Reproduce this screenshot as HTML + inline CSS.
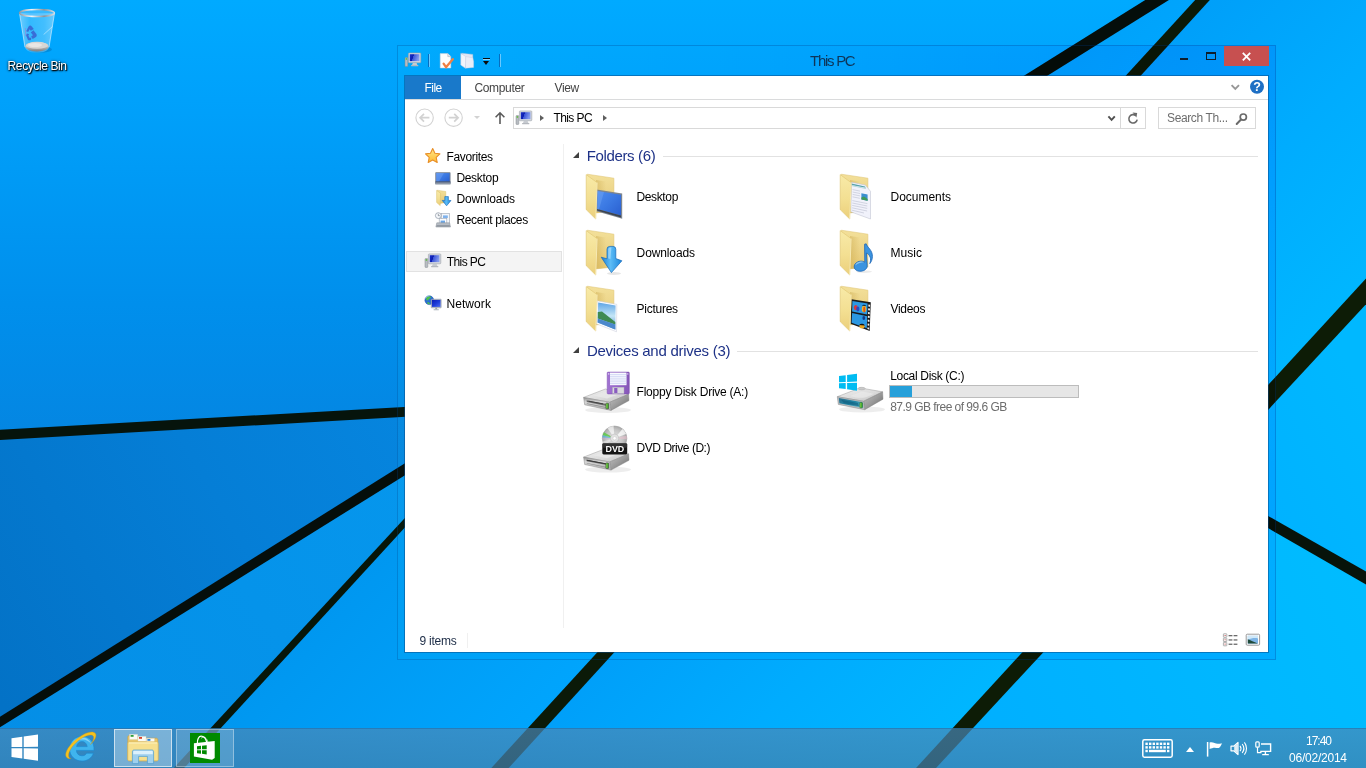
<!DOCTYPE html>
<html lang="en">
<head>
<meta charset="utf-8">
<title>This PC</title>
<style>
html,body{margin:0;padding:0;}
body{width:1366px;height:768px;overflow:hidden;position:relative;background:#0098ee;font-family:"Liberation Sans",sans-serif;font-size:12px;color:#000;}
.a{position:absolute;}
.t{position:absolute;white-space:nowrap;display:block;}
svg{display:block;overflow:visible;}
#wall{position:absolute;left:0;top:0;width:1366px;height:768px;}
/* window chrome */
#frame{position:absolute;left:397px;top:45px;width:879px;height:615px;background:linear-gradient(to right,#8c8c8c,#7c7c7c 45%,#5e5e5e);mix-blend-mode:soft-light;}
#frameb{position:absolute;left:397px;top:45px;width:879px;height:615px;box-sizing:border-box;border:1px solid rgba(0,60,140,.28);}
#client{position:absolute;left:405px;top:76px;width:863px;height:576px;background:#fff;box-shadow:0 0 0 1px rgba(10,70,130,.50);}
#close{position:absolute;left:1224px;top:46px;width:45px;height:20px;background:#c75050;}
#filetab{position:absolute;left:0;top:0;width:56px;height:23px;background:#1979ca;}
#ribline{position:absolute;left:0;top:23px;width:863px;height:1px;background:#dadbdc;}
.box{position:absolute;box-sizing:border-box;border:1px solid #d9d9d9;background:#fff;}
#navsel{position:absolute;left:1px;top:175px;width:156px;height:21px;box-sizing:border-box;background:#f4f4f4;border:1px solid #e2e2e2;}
#vsep{position:absolute;left:158px;top:68px;width:1px;height:484px;background:#f0f0f0;}
.hline{position:absolute;height:1px;background:#e2e2e2;}
.tri{position:absolute;width:0;height:0;border-left:6px solid transparent;border-bottom:6px solid #404040;}
#bar{position:absolute;left:484px;top:309px;width:190px;height:13px;box-sizing:border-box;border:1px solid #bcbcbc;background:#e6e6e6;}
#bar i{position:absolute;left:0;top:0;width:22px;height:11px;background:#26a0da;display:block;}
/* taskbar */
#taskbar{position:absolute;left:0;top:728px;width:1366px;height:40px;background:linear-gradient(rgba(74,136,182,.70),rgba(66,128,172,.72));box-shadow:inset 0 1px 0 rgba(20,90,150,.35);}
.tb{position:absolute;top:1px;height:38px;box-sizing:border-box;}
</style>
</head>
<body>
<svg width="0" height="0" style="position:absolute">
<defs>
<linearGradient id="fBack" x1="0" y1="0" x2="0" y2="1"><stop offset="0" stop-color="#f3e09a"/><stop offset=".5" stop-color="#ecd488"/><stop offset="1" stop-color="#e6c872"/></linearGradient>
<linearGradient id="fFront" x1="0" y1="0" x2="0" y2="1"><stop offset="0" stop-color="#f8eaa8"/><stop offset=".55" stop-color="#f3df92"/><stop offset="1" stop-color="#ebcf7b"/></linearGradient>
<linearGradient id="fShade" x1="0" y1="0" x2="1" y2="0"><stop offset="0" stop-color="#c9a74a" stop-opacity=".45"/><stop offset="1" stop-color="#c9a74a" stop-opacity="0"/></linearGradient>
<linearGradient id="dTop" x1="0" y1="0" x2="1" y2="1"><stop offset="0" stop-color="#f2f2f2"/><stop offset=".6" stop-color="#d9d9d9"/><stop offset="1" stop-color="#bdbdbd"/></linearGradient>
<linearGradient id="dFront" x1="0" y1="0" x2="0" y2="1"><stop offset="0" stop-color="#8f8f8f"/><stop offset=".35" stop-color="#d6d6d6"/><stop offset="1" stop-color="#a9a9a9"/></linearGradient>
<linearGradient id="dSide" x1="0" y1="0" x2="1" y2="1"><stop offset="0" stop-color="#c4c4c4"/><stop offset=".5" stop-color="#9a9a9a"/><stop offset="1" stop-color="#666"/></linearGradient>
<linearGradient id="dGlass" x1="0" y1="0" x2="1" y2="1"><stop offset="0" stop-color="#2b6f8c"/><stop offset=".5" stop-color="#1f86a6"/><stop offset="1" stop-color="#6fc0cc"/></linearGradient>
<linearGradient id="led" x1="0" y1="0" x2="1" y2="0"><stop offset="0" stop-color="#8fe05a"/><stop offset="1" stop-color="#2d9a1c"/></linearGradient>
<linearGradient id="scr" x1="0" y1="0" x2="1" y2="1"><stop offset="0" stop-color="#4f8df0"/><stop offset=".5" stop-color="#3a78e2"/><stop offset="1" stop-color="#2a5fd0"/></linearGradient>
<linearGradient id="arw" x1="0" y1="0" x2="1" y2="0"><stop offset="0" stop-color="#1a7fd6"/><stop offset=".45" stop-color="#5cbcf6"/><stop offset="1" stop-color="#1b86dc"/></linearGradient>
<linearGradient id="sky" x1="0" y1="0" x2="0" y2="1"><stop offset="0" stop-color="#5da4e6"/><stop offset=".5" stop-color="#c4e6f6"/><stop offset="1" stop-color="#4f8fd2"/></linearGradient>
<linearGradient id="pcs" x1="0" y1="0" x2="1" y2=".25"><stop offset="0" stop-color="#1a32cc"/><stop offset=".4" stop-color="#0c1cae"/><stop offset=".44" stop-color="#3a54d8"/><stop offset="1" stop-color="#8299ee"/></linearGradient><linearGradient id="nets" x1="0" y1="0" x2="1" y2="1"><stop offset="0" stop-color="#0a1cb4"/><stop offset=".5" stop-color="#1c3ad8"/><stop offset="1" stop-color="#4c6cf0"/></linearGradient>
<radialGradient id="disc" cx=".5" cy=".5" r=".5"><stop offset="0" stop-color="#fff"/><stop offset=".3" stop-color="#d8d8d8"/><stop offset=".7" stop-color="#c4c4c4"/><stop offset="1" stop-color="#a8a8a8"/></radialGradient>
<linearGradient id="star" x1="0" y1="0" x2="0" y2="1"><stop offset="0" stop-color="#ffe98a"/><stop offset="1" stop-color="#ffb930"/></linearGradient>
<linearGradient id="flop" x1="0" y1="0" x2="1" y2="0"><stop offset="0" stop-color="#a274d2"/><stop offset=".5" stop-color="#9364c6"/><stop offset="1" stop-color="#8656b8"/></linearGradient>
<g id="foldBack"><polygon points="7.3,6.2 33.9,10.2 33.9,43 15,45" fill="url(#fBack)" stroke="#dcc06a" stroke-width=".5"/><polygon points="16,12 26,13.5 26,44 16,45" fill="url(#fShade)"/></g>
<g id="foldFront"><polygon points="6.2,6.6 17.1,14.6 15.7,51 6.2,41.6" fill="url(#fFront)" stroke="#dfc46e" stroke-width=".6"/><polyline points="17.1,14.6 15.7,51" fill="none" stroke="#fff6cf" stroke-width=".7"/></g>
<g id="drive"><polygon points="5.6,33.4 27.4,25 50.6,30.2 31.6,38.3" fill="url(#dTop)" stroke="#9a9a9a" stroke-width=".5"/><polygon points="31.6,38.3 50.6,30.2 51,36.6 33,46.4" fill="url(#dSide)" stroke="#7a7a7a" stroke-width=".4"/><polygon points="5.6,33.4 31.6,38.3 33,46.4 6.7,40.8" fill="url(#dFront)" stroke="#8a8a8a" stroke-width=".5"/></g>
<g id="pc16" transform="scale(1,.93)"><rect x="0" y="6" width="2.8" height="9.5" rx=".6" fill="#b8bcc2" stroke="#7f858c" stroke-width=".5"/><rect x=".7" y="6.7" width="1.4" height="1.6" fill="#58c030"/><rect x="3.4" y="1" width="12.4" height="10.6" rx=".8" fill="#d4d8de" stroke="#9aa0a8" stroke-width=".6"/><rect x="4.8" y="2.4" width="9.6" height="7.4" fill="url(#pcs)"/><path d="M7.8 11.8h3.8l.8 2.3h-5.4z" fill="#c6cad0"/><rect x="6" y="14" width="7.4" height="1.3" rx=".4" fill="#b4b8be"/></g>
</defs>
</svg>
<svg id="wall" width="1366" height="768" viewBox="0 0 1366 768">
<defs>
<linearGradient id="gbase" x1="0" y1="0" x2="1366" y2="0" gradientUnits="userSpaceOnUse"><stop offset="0" stop-color="#0094ec"/><stop offset="1" stop-color="#00b8ff"/></linearGradient>
<linearGradient id="g1" x1="0" y1="0" x2="0" y2="435" gradientUnits="userSpaceOnUse"><stop offset="0" stop-color="#00aaff"/><stop offset=".23" stop-color="#00a1fb"/><stop offset=".7" stop-color="#008fec"/><stop offset="1" stop-color="#0486e2"/></linearGradient>
<linearGradient id="g2" x1="500" y1="410" x2="0" y2="700" gradientUnits="userSpaceOnUse"><stop offset="0" stop-color="#0688e2"/><stop offset=".5" stop-color="#057ed6"/><stop offset="1" stop-color="#0372c6"/></linearGradient>
<linearGradient id="g3" x1="0" y1="768" x2="500" y2="420" gradientUnits="userSpaceOnUse"><stop offset="0" stop-color="#048ee6"/><stop offset="1" stop-color="#0698ee"/></linearGradient>
<linearGradient id="g4" x1="300" y1="637" x2="474" y2="796" gradientUnits="userSpaceOnUse"><stop offset="0" stop-color="#0097f0"/><stop offset="1" stop-color="#00a5fd"/></linearGradient>
<linearGradient id="g6" x1="850" y1="385" x2="1086" y2="601" gradientUnits="userSpaceOnUse"><stop offset="0" stop-color="#009ff9"/><stop offset=".5" stop-color="#00acfe"/><stop offset="1" stop-color="#00b7ff"/></linearGradient>
<linearGradient id="g7" x1="1200" y1="480" x2="1366" y2="400" gradientUnits="userSpaceOnUse"><stop offset="0" stop-color="#00b0ff"/><stop offset="1" stop-color="#00b8ff"/></linearGradient>
<linearGradient id="g8" x1="950" y1="768" x2="1366" y2="600" gradientUnits="userSpaceOnUse"><stop offset="0" stop-color="#00aeff"/><stop offset="1" stop-color="#00bcff"/></linearGradient>
</defs>
<rect width="1366" height="768" fill="url(#gbase)"/>
<polygon fill="url(#g1)" points="0,0 1157,0 516,402 0,435"/>
<polygon fill="url(#g2)" points="0,435 516,403 0,722"/>
<polygon fill="url(#g3)" points="0,722 516,403 179,768 0,768"/>
<polygon fill="url(#g4)" points="179,768 516,403 1157,0 1202.5,0 500,768"/>
<polygon fill="url(#g6)" points="1202.5,0 1366,0 1366,291.5 926,768 500,768"/>
<polygon fill="url(#g7)" points="1366,291.5 1366,578 1193,479"/>
<polygon fill="url(#g8)" points="1366,578 1366,768 926,768 1193,479"/>
<polygon fill="#06140c" points="-29.7,441.8 520.3,410.1 519.7,400.5 -30.2,431.4"/>
<polygon fill="#050e0b" points="-23.1,741.6 1185.8,-10.5 1179.1,-21.2 -27.8,734.1"/>
<polygon fill="#07160a" points="161.5,792.7 519.1,403.0 514.9,399.0 155.8,787.4"/>
<polygon fill="#0b1a08" points="484.5,794.5 1226.7,-18.5 1218.8,-25.8 475.0,785.8"/>
<polygon fill="#0d1c06" points="911.0,795.0 1392.8,275.4 1379.9,263.5 900.3,785.1"/>
<polygon fill="#07130a" points="1394.9,587.9 1195.5,474.7 1190.5,483.3 1389.2,597.9"/>
</svg>
<div id="recycle" class="a" style="left:0;top:0;width:76px;height:80px">
<!--RBICON-->
<svg class="a" style="left:0;top:0" width="60" height="60" viewBox="0 0 60 60">
<defs><linearGradient id="rbg" x1="0" y1="0" x2="1" y2="0"><stop offset="0" stop-color="#fff" stop-opacity=".42"/><stop offset=".3" stop-color="#fff" stop-opacity=".2"/><stop offset=".7" stop-color="#fff" stop-opacity=".26"/><stop offset="1" stop-color="#fff" stop-opacity=".4"/></linearGradient>
<linearGradient id="rbrim" x1="0" y1="0" x2="1" y2="0"><stop offset="0" stop-color="#8f9aa6"/><stop offset=".35" stop-color="#f2f6fa"/><stop offset=".7" stop-color="#8a949e"/><stop offset="1" stop-color="#d5dde5"/></linearGradient>
<linearGradient id="rbbase" x1="0" y1="0" x2="0" y2="1"><stop offset="0" stop-color="#dcdad8"/><stop offset=".5" stop-color="#c2c0be"/><stop offset="1" stop-color="#7e7e80"/></linearGradient></defs>
<ellipse cx="40" cy="49.500" rx="12" ry="3.200" fill="#003a70" opacity=".22"/>
<path d="M19.500 13.200L25 47.200c.6 3.600 5.600 5.400 12 5.400s11.400-1.800 12-5.400L54.500 13.200z" fill="url(#rbg)"/>
<path d="M19.500 13.200L25 47.200M54.500 13.200L49 47.200" stroke="#d9f0ff" stroke-width=".8" opacity=".8" fill="none"/>
<ellipse cx="37" cy="46.600" rx="11.700" ry="4.800" fill="url(#rbbase)"/><ellipse cx="37" cy="45.400" rx="11" ry="3.400" fill="#d9d6d3"/><ellipse cx="35" cy="45" rx="7" ry="2" fill="#efeceb" opacity=".7"/>
<path d="M26.200 31.200l2.400-4.600c.8-1.400 2.200-1.400 3.200-.2l2 2.600-3 1.800-1.200-1.600-1.400 2.800zM33.400 30.200l2.800 3.600c1 1.400.6 3-1 3.800l-2.600 1.400-1.400-2.800 1.800-1-2.200-2.800zM27 33.400l-1 1.800 1.800 4.200c.6 1 1.800 1.200 3 .6l.6-2.600-1.800.6-1.200-2.600.8-1.200z" fill="#3a5fd0" opacity=".85"/>
<path d="M25.400 28l.4 8" stroke="#b070c8" stroke-width="1" opacity=".5"/>
<path d="M52.400 26.600l-8.800 8" stroke="#fff" stroke-width=".8" opacity=".55"/>
<ellipse cx="37" cy="12.900" rx="17.400" ry="3.500" fill="#9fd8ff" fill-opacity=".35" stroke="url(#rbrim)" stroke-width="1.500"/>
</svg>

<span class="t" style="left:7.60px;top:60.44px;font-size:12px;line-height:12px;letter-spacing:-0.396px;color:#fff;text-shadow:1px 1px 1px rgba(0,0,0,.95),0 1px 2px rgba(0,0,0,.85),0 0 3px rgba(0,0,0,.55);">Recycle Bin</span>
</div>
<div id="frame"></div><div id="frameb"></div>
<div id="titlebar" class="a" style="left:405px;top:46px;width:863px;height:30px">

<!--QAT-->
<svg class="a" style="left:0;top:6px" width="16" height="16" viewBox="0 0 16 16"><use href="#pc16"/></svg>
<div class="a" style="left:23px;top:8px;width:1px;height:13px;background:rgba(10,90,170,.75)"></div><div class="a" style="left:24px;top:8px;width:1px;height:13px;background:rgba(150,215,255,.7)"></div>
<svg class="a" style="left:34px;top:6px" width="16" height="17" viewBox="0 0 16 17"><path d="M1.200 1.600h7.600l3 3v11.400H1.200z" fill="#fdfdfd" stroke="#c9ccd2" stroke-width=".5"/><path d="M8.800 1.600v3h3" fill="#e2e6ee" stroke="#9aa2ae" stroke-width=".5"/><path d="M4.600 11.600l2.400 3.600 6.800-8" fill="none" stroke="#ef7f43" stroke-width="2.300" stroke-linecap="round" stroke-linejoin="round"/></svg>
<svg class="a" style="left:55px;top:6px" width="16" height="17" viewBox="0 0 16 17"><polygon points="1.600,1.200 12.800,2.400 12.800,13.400 5.600,14.600" fill="#dfe5f4" stroke="#b9c2da" stroke-width=".4"/><polygon points=".8,1.400 5.800,4.600 5.400,16.200 .8,13" fill="#f1f4fb" stroke="#c3cbe0" stroke-width=".5"/><polygon points="5.800,4.600 12.800,5.800 13.600,9.400 13.600,15.400 5.400,16.200" fill="#e9edf8" stroke="#c3cbe0" stroke-width=".4"/></svg>
<div class="a" style="left:78px;top:12px;width:7px;height:1px;background:#0b0b0b"></div><div class="a" style="left:78px;top:13px;width:7px;height:1px;background:rgba(170,225,255,.8)"></div>
<div class="a" style="left:78px;top:15px;width:0;height:0;border-left:3.500px solid transparent;border-right:3.500px solid transparent;border-top:4px solid #0b0b0b"></div>
<div class="a" style="left:94px;top:8px;width:1px;height:13px;background:rgba(10,90,170,.75)"></div><div class="a" style="left:95px;top:8px;width:1px;height:13px;background:rgba(150,215,255,.7)"></div>

<span class="t" style="left:405.00px;top:6.70px;font-size:15px;line-height:15px;letter-spacing:-1.273px;color:#0e3558;">This PC</span>
<!--CAPTION-->
<div class="a" style="left:775px;top:12px;width:8px;height:2px;background:#0e1e2c"></div>
<div class="a" style="left:801px;top:6px;width:10px;height:8px;box-sizing:border-box;border:1px solid #0e1e2c;border-top-width:2px"></div>

</div>
<div id="close"><svg class="a" style="left:17px;top:6px" width="11" height="10" viewBox="0 0 11 10"><path d="M1.800 .9l7.400 7.400M9.200 .9l-7.400 7.400" stroke="#fff" stroke-width="1.800" fill="none"/></svg></div>

<div id="client">
<div id="filetab"></div>
<span class="t" style="left:19.50px;top:5.94px;font-size:12px;line-height:12px;letter-spacing:-0.544px;color:#fff;">File</span>
<span class="t" style="left:69.40px;top:5.94px;font-size:12px;line-height:12px;letter-spacing:-0.327px;color:#444;">Computer</span>
<span class="t" style="left:149.60px;top:5.94px;font-size:12px;line-height:12px;letter-spacing:-0.441px;color:#444;">View</span>
<div id="ribline"></div>
<!--RIBRIGHT-->
<svg class="a" style="left:825px;top:8px" width="11" height="7" viewBox="0 0 11 7"><path d="M1.600 1.200l3.700 3.700 3.700-3.700" fill="none" stroke="#979797" stroke-width="1.900"/></svg>
<svg class="a" style="left:844px;top:3px" width="16" height="16" viewBox="0 0 16 16"><circle cx="8" cy="7.800" r="7" fill="#1e6fc4"/><text x="8" y="12.300" text-anchor="middle" font-family="Liberation Sans, sans-serif" font-weight="bold" font-size="12.500" fill="#fff">?</text></svg>

<!--NAVBTNS-->
<svg class="a" style="left:9px;top:31px" width="22" height="22" viewBox="0 0 22 22"><circle cx="10.600" cy="10.700" r="8.700" fill="none" stroke="#d2d2d2" stroke-width="1.100"/><path d="M15.400 10.700H6.400M10 6.800l-3.900 3.900 3.900 3.900" fill="none" stroke="#d2d2d2" stroke-width="1.700"/></svg>
<svg class="a" style="left:38px;top:31px" width="22" height="22" viewBox="0 0 22 22"><circle cx="10.600" cy="10.700" r="8.700" fill="none" stroke="#d2d2d2" stroke-width="1.100"/><path d="M5.800 10.700h9M11.200 6.800l3.900 3.900-3.900 3.900" fill="none" stroke="#d2d2d2" stroke-width="1.700"/></svg>
<div class="a" style="left:69px;top:40px;width:0;height:0;border-left:3.500px solid transparent;border-right:3.500px solid transparent;border-top:3.500px solid #d2d2d2"></div>
<svg class="a" style="left:89px;top:35px" width="12" height="14" viewBox="0 0 12 14"><path d="M6 13V2M1.600 6.200L6 1.800l4.400 4.400" fill="none" stroke="#5a5a5a" stroke-width="1.600"/></svg>

<div class="box" style="left:108px;top:31px;width:633px;height:22px"></div>
<div class="a" style="left:715px;top:32px;width:1px;height:20px;background:#d9d9d9"></div>
<div class="box" style="left:753px;top:31px;width:98px;height:22px"></div>
<!--ADDRICONS-->
<svg class="a" style="left:111px;top:34px" width="16" height="16" viewBox="0 0 16 16"><use href="#pc16"/></svg>
<div class="a" style="left:135px;top:39px;width:0;height:0;border-top:3.500px solid transparent;border-bottom:3.500px solid transparent;border-left:4px solid #5e5e5e"></div>
<div class="a" style="left:198px;top:39px;width:0;height:0;border-top:3.500px solid transparent;border-bottom:3.500px solid transparent;border-left:4px solid #5e5e5e"></div>
<svg class="a" style="left:702px;top:39px" width="10" height="8" viewBox="0 0 10 8"><path d="M1.400 1.400l3.200 3.500 3.200-3.500" fill="none" stroke="#505050" stroke-width="1.900"/></svg>
<svg class="a" style="left:721px;top:36px" width="14" height="14" viewBox="0 0 14 14"><path d="M9.900 3.700A4.200 4.200 0 1 0 11.200 7.600" fill="none" stroke="#6a6a6a" stroke-width="1.600"/><path d="M6.600 .6l4.600.4-.8 4.600z" fill="#6a6a6a"/></svg>
<svg class="a" style="left:830px;top:36px" width="14" height="14" viewBox="0 0 14 14"><circle cx="8.300" cy="5.100" r="3.100" fill="none" stroke="#6a6a6a" stroke-width="1.700"/><path d="M6 7.500L1.700 12" stroke="#6a6a6a" stroke-width="2" stroke-linecap="round"/></svg>

<span class="t" style="left:148.40px;top:35.74px;font-size:12px;line-height:12px;letter-spacing:-0.562px;">This PC</span>
<span class="t" style="left:762.00px;top:35.74px;font-size:12px;line-height:12px;letter-spacing:-0.377px;color:#6d6d6d;">Search Th...</span>
<div id="vsep"></div>
<div id="navsel"></div>
<!--NAVICONS-->
<svg class="a" style="left:19px;top:71px" width="18" height="18" viewBox="0 0 18 18"><path d="M8.700 1.600l2.200 4.700 5 .6-3.700 3.500 1 5.100-4.500-2.500-4.500 2.500 1-5.100L1.500 6.900l5-.6z" fill="url(#star)" stroke="#e88f28" stroke-width="1.100" stroke-linejoin="round"/></svg>
<svg class="a" style="left:30px;top:96px" width="16" height="13" viewBox="0 0 16 13"><rect x=".3" y=".3" width="15.200" height="12" rx=".6" fill="#6f7b8c"/><rect x="1.200" y="1.100" width="13.400" height="8.300" fill="url(#scr)"/><polygon points="1.200,1.100 9,1.100 4,9.400 1.200,9.400" fill="#8db7fa" opacity=".3"/><rect x=".3" y="10" width="15.200" height="2.300" fill="#8d97a6"/><rect x=".3" y="9.600" width="15.200" height=".7" fill="#2c3f66"/></svg>
<svg class="a" style="left:31px;top:113px" width="17" height="18" viewBox="0 0 17 18"><polygon points="1.200,1.200 9.800,2.500 9.800,13.400 4.200,14.400" fill="url(#fBack)" stroke="#d9bc62" stroke-width=".4"/><polygon points=".6,1.400 4.600,4.200 4.200,16.600 .6,13.400" fill="url(#fFront)" stroke="#dcc068" stroke-width=".5"/><path d="M8.800 7.600h3.600v3.800l2.600.1-4.400 5.300-4.400-5.400 2.600.1z" fill="url(#arw)" stroke="#1668b8" stroke-width=".6" stroke-linejoin="round"/></svg>
<svg class="a" style="left:30px;top:136px" width="16" height="16" viewBox="0 0 16 16"><rect x="6.200" y="1.600" width="8.400" height="10" fill="#f4f7fb" stroke="#9aa4b2" stroke-width=".6"/><rect x="8" y="3.400" width="4.800" height="2.600" fill="#7fb2ec"/><rect x="4.200" y="6.600" width="7.600" height="6" fill="#fbfcfe" stroke="#9aa4b2" stroke-width=".6"/><rect x="5.600" y="8.600" width="4.400" height="2.400" fill="#6aa6e6"/><path d="M1.800 10.800h12.800l.9 4.200H.900z" fill="#b6bcc4" stroke="#868d96" stroke-width=".5"/><rect x="1.600" y="13.200" width="13.200" height="1.400" fill="#8b929b"/><circle cx="3.300" cy="3.600" r="2.900" fill="#f7f9fc" stroke="#8d96a3" stroke-width=".7"/><path d="M3.300 1.800v1.900h1.500" fill="none" stroke="#5a6470" stroke-width=".6"/></svg>
<svg class="a" style="left:20px;top:177.300px" width="16" height="16" viewBox="0 0 16 16"><use href="#pc16"/></svg>
<svg class="a" style="left:19px;top:218px" width="18" height="18" viewBox="0 0 18 18"><circle cx="5.300" cy="6.200" r="4.400" fill="#2a6fd6" stroke="#1d4fa8" stroke-width=".5"/><path d="M2.200 3.800c1.600-1.800 3.800-2 5-.8-.4 1.200-1.800 1.400-2.400 2.600-.4 1-1.600 1-2.600.4zM3 8.400c1.200-.6 2.600 0 3 1.600-1.200.6-2.600 0-3-1.600z" fill="#4fc04a"/><path d="M1.600 4.400a4.400 4.400 0 0 1 4-2.600" fill="none" stroke="#bfe0ff" stroke-width=".7" opacity=".8"/><rect x="7.200" y="5.200" width="10" height="8.600" rx=".5" fill="#b9c0cc" stroke="#7f8896" stroke-width=".5"/><rect x="7.900" y="5.900" width="8.600" height="7" fill="url(#nets)"/><rect x="11.300" y="13.600" width="1.800" height="1.800" fill="#9aa1ab"/><rect x="9.600" y="15.200" width="5.200" height="1" rx=".3" fill="#a9b0b9"/></svg>

<span class="t" style="left:41.50px;top:74.74px;font-size:12px;line-height:12px;letter-spacing:-0.356px;">Favorites</span>
<span class="t" style="left:51.40px;top:95.74px;font-size:12px;line-height:12px;letter-spacing:-0.303px;">Desktop</span>
<span class="t" style="left:51.40px;top:116.74px;font-size:12px;line-height:12px;letter-spacing:-0.096px;">Downloads</span>
<span class="t" style="left:51.40px;top:137.74px;font-size:12px;line-height:12px;letter-spacing:-0.354px;">Recent places</span>
<span class="t" style="left:41.80px;top:179.74px;font-size:12px;line-height:12px;letter-spacing:-0.612px;">This PC</span>
<span class="t" style="left:41.40px;top:221.74px;font-size:12px;line-height:12px;letter-spacing:0.093px;">Network</span>
<div class="tri" style="left:168px;top:76px"></div>
<span class="t" style="left:181.70px;top:72.00px;font-size:15px;line-height:15px;letter-spacing:-0.352px;color:#1e3287;">Folders (6)</span>
<div class="hline" style="left:258px;top:80px;width:595px"></div>
<div class="tri" style="left:168px;top:271px"></div>
<span class="t" style="left:181.90px;top:266.70px;font-size:15px;line-height:15px;letter-spacing:-0.268px;color:#1e3287;">Devices and drives (3)</span>
<div class="hline" style="left:332px;top:275px;width:521px"></div>
<!--ITEMICONS-->
<svg class="a" style="left:175px;top:92px" width="56" height="56" viewBox="0 0 56 56"><use href="#foldBack"/>
<polygon points="16.6,21.4 42.2,25.6 42.2,50.8 16.4,43.2" fill="#7d858f"/><polygon points="17.4,23 41,26.8 41,47.6 17.2,41" fill="url(#scr)"/><polygon points="17.2,41 41,47.6 41,49.6 17.1,42.6" fill="#3c4450"/><polygon points="17.4,23 24,24 19,41.5 17.2,41" fill="#7fb0f6" opacity=".35"/>
<use href="#foldFront"/></svg>
<svg class="a" style="left:175px;top:148px" width="56" height="56" viewBox="0 0 56 56"><use href="#foldBack"/><use href="#foldFront"/>
<ellipse cx="34" cy="49.5" rx="7" ry="1.4" fill="#000" opacity=".10"/>
<path d="M27 25.2q0-2.8 2.8-2.8h3.2q2.8 0 2.8 2.8v9.4l6.1 2.2-10.5 11.8-10.2-15.4 5.8 1.6z" fill="url(#arw)" stroke="#1668b8" stroke-width=".7" stroke-linejoin="round"/>
<path d="M28.2 25.6q0-2 2-2h1.2l-1 11.5-2.2-.6z" fill="#bfe6ff" opacity=".55"/></svg>
<svg class="a" style="left:175px;top:204px" width="56" height="56" viewBox="0 0 56 56"><use href="#foldBack"/>
<polygon points="17.1,20.8 36.8,24.4 36.5,51.8 16.4,43.8" fill="#fbfcff" stroke="#c8ccd8" stroke-width=".5"/>
<polygon points="18.2,22.4 35.6,25.6 35.3,49.6 17.6,42.6" fill="url(#sky)"/>
<polygon points="17.8,32 22,31.5 35.3,42 35.3,44.5 17.7,38.5" fill="#3f8a52"/><polygon points="17.7,38.4 35.3,44.4 35.3,49.6 17.6,42.6" fill="#4b88cc"/>
<use href="#foldFront"/></svg>
<svg class="a" style="left:429px;top:92px" width="56" height="56" viewBox="0 0 56 56"><use href="#foldBack"/>
<polygon points="17.5,14.2 31.4,17.1 36.5,23.3 36.5,51 16.8,43.8" fill="#f1f2fb" stroke="#b9bccb" stroke-width=".5"/>
<polygon points="17.6,15.6 31,18.4 31.8,19.8 17.6,16.9" fill="#57a3ab"/><polygon points="17.6,17.2 32,20.2 32,20.9 17.6,17.9" fill="#a9d4d8"/>
<polygon points="27.4,25.2 33.6,26.4 33.6,32.8 27.4,31.6" fill="#3b8ed0"/><polygon points="27.4,29.6 30,28.4 33.6,31 33.6,32.8 27.4,31.6" fill="#3f9a58"/>
<g stroke="#c3c5d6" stroke-width=".7"><path d="M18.6 21.6l7.4 1.5M18.6 24l7.4 1.5M18.6 26.4l7.4 1.5M18.5 28.8l7.4 1.5M18.4 32.6l15 3M18.3 35l15 3M18.2 37.4l15 3M18.1 39.8l15 3.2M18 42.2l12 2.8"/></g>
<use href="#foldFront"/></svg>
<svg class="a" style="left:429px;top:148px" width="56" height="56" viewBox="0 0 56 56"><use href="#foldBack"/><use href="#foldFront"/>
<ellipse cx="30" cy="47.6" rx="8" ry="1.3" fill="#000" opacity=".08"/>
<path d="M30.6 20.2l1.6-.4c.6 3.2 6.4 6.200 6.200 12.600 0 3.200-1.200 5.400-2.600 7.200.8-2.400 1-4.400.4-6.200-.6-2.200-2.400-3.800-3.800-4.400l.8 12.600c.2 3-2.600 5.200-6 5.600-3.800.4-6.800-1.400-7-4.200-.2-2.800 2.400-5.400 6-5.800 1.800-.2 3.400.2 4.600 1z" fill="#3b94e0" stroke="#1c66b6" stroke-width=".8" stroke-linejoin="round"/>
<path d="M21.200 41.400c.4-2 2.600-3.600 5.200-3.800 1.600-.2 3 .2 4 .8-2.200-.2-6.200.6-9.200 3z" fill="#9fd2f8" opacity=".8"/></svg>
<svg class="a" style="left:429px;top:204px" width="56" height="56" viewBox="0 0 56 56"><use href="#foldBack"/>
<polygon points="17.5,19.3 36.8,22.2 35.7,51 16.600,43.8" fill="#1a1a1a"/>
<polygon points="18.4,21 33.6,23.400 33.200,34.600 18.100,31.400" fill="#2c98e2"/><polygon points="18.100,33 33.200,36.200 32.800,48.200 17.600,42.800" fill="#2c98e2"/>
<ellipse cx="21.800" cy="27.600" rx="2" ry="2.600" fill="#d8383c"/><ellipse cx="23.800" cy="29" rx="1.600" ry="2.400" fill="#2a48c0"/><ellipse cx="30" cy="29" rx="2.200" ry="3.200" fill="#f0b428"/><ellipse cx="30.200" cy="29.400" rx="1" ry="3" fill="#d8541c"/><path d="M27.800 25.600a3 3 0 0 1 4.600.4z" fill="#111"/>
<ellipse cx="28" cy="46.200" rx="2.600" ry="2.200" fill="#e8a420"/><path d="M25.200 45a3 2.400 0 0 1 5.600.6z" fill="#111"/><ellipse cx="29.800" cy="38" rx="1.400" ry="2" fill="#153a86"/>
<g fill="#f4f4f4"><polygon points="34.400,24.400 36.100,24.700 36,26.700 34.300,26.400"/><polygon points="34.250,28.200 35.950,28.500 35.850,30.500 34.150,30.200"/><polygon points="34.100,32 35.800,32.300 35.700,34.300 34,34"/><polygon points="33.950,35.800 35.650,36.100 35.550,38.100 33.850,37.800"/><polygon points="33.800,39.600 35.500,39.900 35.400,41.900 33.700,41.600"/><polygon points="33.650,43.400 35.350,43.700 35.250,45.700 33.550,45.400"/><polygon points="33.500,47.200 35.200,47.700 35.100,49.500 33.400,49"/></g>
<use href="#foldFront"/></svg>
<svg class="a" style="left:173px;top:288px" width="60" height="54" viewBox="0 0 60 54"><ellipse cx="30" cy="46" rx="23" ry="3" fill="#000" opacity=".07"/><use href="#drive"/>
<polygon points="8.6,36.200 28.600,40 28.800,42 8.800,38" fill="#6a6a6a"/><polygon points="10.600,36.800 25,39.400 25,40.200 10.600,37.600" fill="#3a3a3a"/>
<polygon points="8.800,39.200 27.600,43 27.600,43.800 8.900,39.900" fill="#8d8d8d"/>
<rect x="27.800" y="39.200" width="2.800" height="5.600" rx=".6" fill="url(#led)" stroke="#333" stroke-width=".5"/>
<polygon points="16,31.800 27.600,27.600 40,30.400 29,34.600" fill="#e9e9e9" opacity=".8"/>
<rect x="29.200" y="8.100" width="22.100" height="21.800" rx=".8" fill="url(#flop)" stroke="#7a4cae" stroke-width=".5"/>
<rect x="32" y="8.600" width="16.500" height="12.600" fill="#fafaff"/>
<g stroke="#b9c3ee" stroke-width=".6"><path d="M32 10.600h16.500M32 12.400h16.500M32 14.200h16.500M32 16h16.500M32 17.800h16.500M32 19.600h16.500"/></g>
<rect x="34.500" y="23.200" width="11.500" height="6.400" fill="#d9d9dd" stroke="#a9a9b4" stroke-width=".4"/><rect x="36.200" y="24" width="3.200" height="5" fill="#8a5cc0"/>
<circle cx="30.700" cy="9.900" r=".7" fill="#f2e9ff"/><circle cx="49.800" cy="9.900" r=".7" fill="#f2e9ff"/>
</svg>
<svg class="a" style="left:173px;top:344px" width="60" height="54" viewBox="0 0 60 54"><ellipse cx="30" cy="49.600" rx="23" ry="3" fill="#000" opacity=".07"/>
<g transform="translate(0,3.700)"><use href="#drive"/>
<polygon points="8.600,36 28.600,39.800 28.800,41.400 8.800,37.600" fill="#5d5d5d"/><polygon points="8.700,36.100 28.600,39.900 28.600,40.500 8.700,36.700" fill="#2e2e2e"/>
<polygon points="8.800,39.200 27.600,43 27.600,43.800 8.900,39.900" fill="#8d8d8d"/>
<rect x="27.800" y="39.200" width="2.800" height="5.600" rx=".6" fill="url(#led)" stroke="#333" stroke-width=".5"/>
<polygon points="16,31.800 27.600,27.600 40,30.400 29,34.600" fill="#e9e9e9" opacity=".8"/></g>
<clipPath id="dvdclip"><rect x="20" y="4" width="36" height="19.600"/></clipPath>
<g clip-path="url(#dvdclip)"><circle cx="36.600" cy="18.300" r="12.300" fill="url(#disc)" stroke="#9c9c9c" stroke-width=".5"/>
<path d="M36.6 18.3 L25.9 12.2 A12.3 12.3 0 0 0 24.7 15.3 z" fill="#58cc40" opacity=".8"/><path d="M36.6 18.3 L24.7 15.3 A12.3 12.3 0 0 0 24.3 17.4 z" fill="#40b4dc" opacity=".65"/><path d="M36.6 18.3 L24.3 17.4 A12.3 12.3 0 0 0 24.4 19.6 z" fill="#c8a0d8" opacity=".4"/><path d="M36.6 18.3 L48.2 14.1 A12.3 12.3 0 0 0 44.5 8.9 z" fill="#ffffff" opacity=".75"/><path d="M36.6 18.3 L48.9 19.2 A12.3 12.3 0 0 0 48.6 15.7 z" fill="#f0c0d0" opacity=".5"/><path d="M36.6 18.3 L35.5 6.0 A12.3 12.3 0 0 0 29.5 8.2 z" fill="#ffffff" opacity=".65"/><path d="M36.6 18.3 L24.7 21.5 A12.3 12.3 0 0 0 26.5 25.4 z" fill="#ffffff" opacity=".4"/>
<circle cx="36.600" cy="18.300" r="4.200" fill="#e2e2e2" stroke="#b4b4b4" stroke-width=".5"/><circle cx="36.600" cy="18.300" r="1.700" fill="#fff" stroke="#bdbdbd" stroke-width=".4"/></g>
<rect x="24.300" y="23.200" width="24.900" height="11.300" rx="1.400" fill="#141414"/><rect x="24.300" y="23.200" width="24.900" height="4.500" rx="1.400" fill="#4a4a4a" opacity=".55"/>
<text x="36.900" y="31.900" text-anchor="middle" font-family="Liberation Sans, sans-serif" font-weight="bold" font-size="9" fill="#fff" opacity=".99" textLength="18.800" lengthAdjust="spacingAndGlyphs">DVD</text>
</svg>
<svg class="a" style="left:427px;top:288px" width="60" height="54" viewBox="0 0 60 54"><ellipse cx="30" cy="45.400" rx="23" ry="3" fill="#000" opacity=".07"/>
<g transform="translate(0,-.8)"><polygon points="5.300,33.500 28.100,24.700 50.600,28.600 31.600,38.100" fill="url(#dTop)" stroke="#9a9a9a" stroke-width=".5"/><polygon points="31.600,38.100 50.600,28.600 51,36 32.700,46.500" fill="url(#dSide)" stroke="#7a7a7a" stroke-width=".4"/><polygon points="5.300,33.500 31.600,38.100 32.700,46.500 6.300,41.200" fill="#b9bdc0" stroke="#8a8a8a" stroke-width=".5"/>
<polygon points="6.800,34.800 30.400,39 31.200,44.800 7.400,40" fill="url(#dGlass)"/><polygon points="9,36.600 26,39.800 27,43 12,40" fill="#0e5a7c" opacity=".6"/>
<rect x="27.800" y="39.200" width="2.600" height="5.400" rx=".6" fill="url(#led)" stroke="#1a4a1a" stroke-width=".4"/>
<ellipse cx="29.600" cy="25.400" rx="3.600" ry="1.300" fill="#c9c9c9" stroke="#9d9d9d" stroke-width=".4"/>
<path d="M18 32.800l12-4.400 12 2.200-6 2.800c-4 1.600-8 1.400-12 .8z" fill="#eaeaea" opacity=".7"/></g>
<g fill="#00bcf2"><polygon points="7,12 13.700,11.300 13.700,17.900 7,18.300"/><polygon points="15.100,11.100 25,9.800 25,17.600 15.100,17.900"/><polygon points="7,19.300 13.700,19.100 13.700,25 7,24.300"/><polygon points="15.100,19.100 25,18.800 25,26.700 15.100,25.300"/></g>
</svg>

<span class="t" style="left:231.50px;top:114.84px;font-size:12px;line-height:12px;letter-spacing:-0.369px;">Desktop</span>
<span class="t" style="left:231.60px;top:170.84px;font-size:12px;line-height:12px;letter-spacing:-0.121px;">Downloads</span>
<span class="t" style="left:231.60px;top:226.84px;font-size:12px;line-height:12px;letter-spacing:-0.263px;">Pictures</span>
<span class="t" style="left:485.50px;top:114.84px;font-size:12px;line-height:12px;letter-spacing:-0.024px;">Documents</span>
<span class="t" style="left:485.50px;top:170.84px;font-size:12px;line-height:12px;letter-spacing:0.042px;">Music</span>
<span class="t" style="left:485.50px;top:226.84px;font-size:12px;line-height:12px;letter-spacing:-0.296px;">Videos</span>
<span class="t" style="left:231.60px;top:309.84px;font-size:12px;line-height:12px;letter-spacing:-0.242px;">Floppy Disk Drive (A:)</span>
<span class="t" style="left:231.60px;top:365.84px;font-size:12px;line-height:12px;letter-spacing:-0.470px;">DVD Drive (D:)</span>
<span class="t" style="left:485.20px;top:293.84px;font-size:12px;line-height:12px;letter-spacing:-0.320px;">Local Disk (C:)</span>
<div id="bar"><i></i></div>
<span class="t" style="left:485.20px;top:325.14px;font-size:12px;line-height:12px;letter-spacing:-0.534px;color:#6d6d6d;">87.9 GB free of 99.6 GB</span>
<span class="t" style="left:14.40px;top:558.64px;font-size:12px;line-height:12px;letter-spacing:-0.229px;color:#1b2b45;">9 items</span>
<!--STATUSICONS-->
<div class="a" style="left:62px;top:557px;width:1px;height:15px;background:#f0f0f0"></div>
<svg class="a" style="left:817px;top:557px" width="18" height="14" viewBox="0 0 18 14"><g fill="#fff" stroke="#9a9a9a" stroke-width=".8"><rect x="1.400" y=".8" width="3.400" height="3.400" rx=".4"/><rect x="1.400" y="5.100" width="3.400" height="3.400" rx=".4"/><rect x="1.400" y="9.400" width="3.400" height="3.400" rx=".4"/></g><g fill="#c04040"><rect x="2.600" y="2" width="1" height="1"/><rect x="2.600" y="6.300" width="1" height="1"/><rect x="2.600" y="10.600" width="1" height="1"/></g><g fill="#6a6a6a"><rect x="6.600" y="2" width="3.800" height="1.300"/><rect x="11.600" y="2" width="3.800" height="1.300"/><rect x="6.600" y="6.300" width="3.800" height="1.300"/><rect x="11.600" y="6.300" width="3.800" height="1.300"/><rect x="6.600" y="10.600" width="3.800" height="1.300"/><rect x="11.600" y="10.600" width="3.800" height="1.300"/></g></svg>
<svg class="a" style="left:840px;top:557px" width="16" height="14" viewBox="0 0 16 14"><rect x="1.200" y="1.200" width="13.400" height="11" rx="1" fill="#fdfdfd" stroke="#8e8e8e" stroke-width=".9"/><rect x="2.800" y="2.800" width="10.200" height="7.800" fill="#7db4e6"/><path d="M2.800 6l4.600 2.200 5.600 2.400H2.800z" fill="#1f4a3a"/><path d="M2.800 3h10.200v2.400c-3.400-.8-6.800-.2-10.200 1.200z" fill="#cfe8f8"/></svg>

</div>

<div id="taskbar">
<!--TBICONS-->
<svg class="a" style="left:11px;top:6px" width="28" height="28" viewBox="0 0 28 28"><g fill="#fff"><polygon points=".5,4.200 11.300,2.700 11.300,12.900 .5,13"/><polygon points="12.700,2.500 27,.5 27,12.800 12.700,12.900"/><polygon points=".5,14.200 11.300,14.300 11.300,24.500 .5,23"/><polygon points="12.700,14.300 27,14.400 27,26.700 12.700,24.700"/></g></svg>
<svg class="a" style="left:62px;top:1px" width="38" height="36" viewBox="0 0 38 36"><path d="M20 7.200c-7.200 0-12.400 5.200-12.400 12.600 0 7.200 5.200 12.200 12.400 12.200 5.400 0 9.800-3 11.400-7.800h-6.800c-.8 1.600-2.400 2.600-4.600 2.600-3.200 0-5.400-2.200-5.600-5.400h17.600c.6-8.200-4.400-14.200-12-14.200zm-5.400 10.400c.4-3 2.400-5 5.400-5 2.800 0 4.800 2 5.200 5z" fill="#3fb4ee" stroke="#1a86d0" stroke-width=".6"/><path d="M20 8.600c-6 0-10.600 4.200-11 10.200 1.200-5 5.400-8.200 11-8.200 4.400 0 7.800 2 9.600 5.200-1.600-4.400-5-7.200-9.600-7.200z" fill="#a8e0fa" opacity=".7"/><path d="M33.400 4.600c1.600 2.400-.4 6.600-5 11 3-3.800 4-7 2.800-8.600-1.600-2.200-6.600-1-12 2.600C11.600 14.600 6 22.400 6.600 27c.2 1.400 1 2.200 2.200 2.600-2.200.2-3.800-.4-4.600-1.800C2 24 7.400 15.200 16 9c7.600-5.600 15-7.600 17.400-4.400z" fill="#f6c21e" stroke="#d79a10" stroke-width=".4"/></svg>
<div class="tb" style="left:114px;width:58px;background:rgba(255,255,255,.34);border:1px solid rgba(255,255,255,.62)"></div>
<svg class="a" style="left:126px;top:4px" width="34" height="32" viewBox="0 0 34 32"><path d="M1.800 5.200c0-1 .6-1.600 1.600-1.600h7c.8 0 1.400.4 1.800 1l1 1.600h17c1 0 1.600.6 1.600 1.600v19.400c0 1-.6 1.600-1.600 1.600H3.400c-1 0-1.600-.6-1.600-1.600z" fill="#e9c66a" stroke="#c9a040" stroke-width=".6"/><rect x="3.600" y="2.400" width="8" height="5" fill="#fbfbf4" stroke="#d6d6c8" stroke-width=".4"/><rect x="4.600" y="3" width="3" height="1.800" fill="#2e9e3a"/><rect x="12" y="4.400" width="8" height="5" fill="#fbfbf4" stroke="#d6d6c8" stroke-width=".4"/><rect x="13" y="5" width="3" height="1.800" fill="#d8402c"/><rect x="20.400" y="6.400" width="8" height="5" fill="#fbfbf4" stroke="#d6d6c8" stroke-width=".4"/><rect x="21.400" y="7" width="3" height="1.800" fill="#2a7fd8"/><path d="M1.800 11.400c0-1 .6-1.600 1.600-1.600h27.200c1 0 1.600.6 1.600 1.600v15.800c0 1-.6 1.600-1.600 1.600H3.400c-1 0-1.600-.6-1.600-1.600z" fill="#f7e08e" stroke="#d9b554" stroke-width=".6"/><path d="M3 11h28" stroke="#fdf2c0" stroke-width="1"/><path d="M6.400 19.800c0-1.200.6-1.800 1.800-1.800h17.600c1.200 0 1.800.6 1.800 1.800v11.800h-6.200v-7.200h-8.800v7.200H6.400z" fill="#9fd0ee" stroke="#4f9ed0" stroke-width=".7"/><path d="M7.200 20c0-.8.400-1.200 1.200-1.200h17.200c.8 0 1.200.4 1.200 1.200v2.200H7.200z" fill="#e2f4fd" opacity=".9"/></svg>
<div class="tb" style="left:176px;width:58px;background:rgba(255,255,255,.16);border:1px solid rgba(255,255,255,.36)"></div>
<svg class="a" style="left:190px;top:5px" width="30" height="30" viewBox="0 0 30 30"><rect width="30" height="30" fill="#008a00"/><path d="M3.900 10.200L24.700 8.100V25L22.100 26.800 3.900 23.400z" fill="#fff"/><path d="M7.400 10.200c-.2-4 1.400-7 3.700-7 2.400 0 4.600 2.200 5.600 5.800" fill="none" stroke="#fff" stroke-width="1.300"/><path d="M11.200 5.200c1.200-1.200 2.600-1.400 3.800-.6 1.400 1 2.400 2.600 3 4.600" fill="none" stroke="#fff" stroke-width=".9" opacity=".85"/><g fill="#008a00"><polygon points="7,13.200 11,12.800 11,16.300 7,16.400"/><polygon points="12,12.700 16.700,12.300 16.700,16.200 12,16.300"/><polygon points="7,17.300 11,17.300 11,20.700 7,20.200"/><polygon points="12,17.300 16.700,17.300 16.700,21.500 12,20.800"/></g></svg>
<svg class="a" style="left:1142px;top:11px" width="31" height="19" viewBox="0 0 31 19"><rect x=".8" y=".8" width="29.400" height="17.400" rx="1.600" fill="none" stroke="#fff" stroke-width="1.500"/><g fill="#fff"><rect x="3.400" y="3.600" width="2.400" height="2.400"/><rect x="7" y="3.600" width="2.400" height="2.400"/><rect x="10.600" y="3.600" width="2.400" height="2.400"/><rect x="14.200" y="3.600" width="2.400" height="2.400"/><rect x="17.800" y="3.600" width="2.400" height="2.400"/><rect x="21.400" y="3.600" width="2.400" height="2.400"/><rect x="25" y="3.600" width="2.400" height="2.400"/><rect x="3.400" y="7.200" width="2.400" height="2.400"/><rect x="7" y="7.200" width="2.400" height="2.400"/><rect x="10.600" y="7.200" width="2.400" height="2.400"/><rect x="14.200" y="7.200" width="2.400" height="2.400"/><rect x="17.800" y="7.200" width="2.400" height="2.400"/><rect x="21.400" y="7.200" width="2.400" height="2.400"/><rect x="25" y="7.200" width="2.400" height="2.400"/><rect x="3.400" y="10.800" width="2.400" height="2.400"/><rect x="7" y="10.800" width="16.800" height="2.400"/><rect x="25" y="10.800" width="2.400" height="2.400"/></g></svg>
<div class="a" style="left:1186px;top:19px;width:0;height:0;border-left:4.500px solid transparent;border-right:4.500px solid transparent;border-bottom:5px solid #fff"></div>
<svg class="a" style="left:1206px;top:13px" width="18" height="16" viewBox="0 0 18 16"><path d="M1.600 1v14.600" stroke="#fff" stroke-width="1.500"/><path d="M3.600 1.600c3-1.200 5.400 1.200 8 1.200 1.600 0 3-.4 4.600-.2-1 1-1.200 2.400-2.400 3.600-1.600 1.600-3.200.6-5 .6-1.800 0-3.400.6-5.200 1.200z" fill="#fff"/></svg>
<svg class="a" style="left:1230px;top:13px" width="18" height="15" viewBox="0 0 18 15"><path d="M1 5.200h2.800L8 1.400v12.200L3.800 9.800H1z" fill="none" stroke="#fff" stroke-width="1.200" stroke-linejoin="round"/><path d="M4.200 5.400L7.600 2.400v10.200L4.200 9.600z" fill="#fff" opacity=".85"/><path d="M10 4.800c1.200 1.600 1.200 3.800 0 5.400M12.200 3c2 2.600 2 6.400 0 9M14.400 1.400c2.800 3.600 2.800 8.600 0 12.200" fill="none" stroke="#fff" stroke-width="1.100"/></svg>
<svg class="a" style="left:1255px;top:13px" width="17" height="15" viewBox="0 0 17 15"><rect x=".8" y=".8" width="3.400" height="5.400" rx="1" fill="none" stroke="#fff" stroke-width="1.200"/><path d="M2.500 6.200v5.400h4" fill="none" stroke="#fff" stroke-width="1.200"/><path d="M6 3h9.600v7.400H5.200" fill="none" stroke="#fff" stroke-width="1.400"/><path d="M10.400 10.400v2.800M7.200 13.600h6.600" stroke="#fff" stroke-width="1.400"/></svg>

</div>
<span class="t" style="left:1306.00px;top:734.64px;font-size:12px;line-height:12px;letter-spacing:-1.006px;color:#fff;">17:40</span>
<span class="t" style="left:1289.00px;top:751.54px;font-size:12px;line-height:12px;letter-spacing:-0.229px;color:#fff;">06/02/2014</span>
</body>
</html>
